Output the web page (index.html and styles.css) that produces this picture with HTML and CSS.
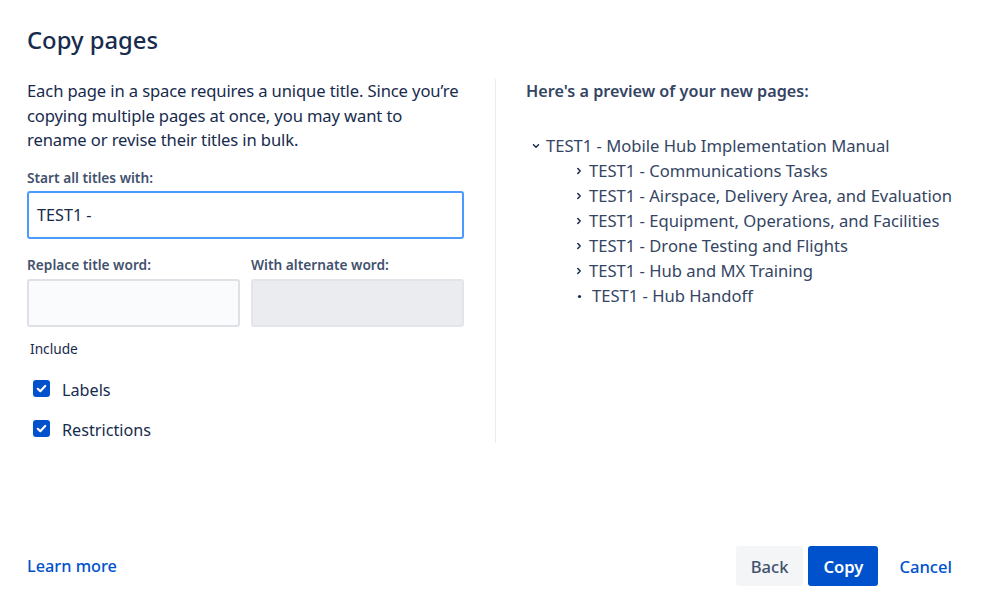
FILE: index.html
```html
<!DOCTYPE html>
<html>
<head>
<meta charset="utf-8">
<link rel="stylesheet" href="styles.css">
</head>
<body>
<div class="dialog">
  <h1 class="title">Copy pages</h1>
  <div class="columns">
    <div class="left">
      <p class="intro">Each page in a space requires a unique title. Since you’re copying multiple pages at once, you may want to rename or revise their titles in bulk.</p>
      <label class="field-label">Start all titles with:</label>
      <div class="input focused">TEST1 -</div>
      <div class="pair">
        <div class="pair-col">
          <label class="field-label">Replace title word:</label>
          <div class="input"></div>
        </div>
        <div class="pair-col">
          <label class="field-label">With alternate word:</label>
          <div class="input disabled"></div>
        </div>
      </div>
      <div class="include">Include</div>
      <div class="check-row first">
        <span class="checkbox"><svg viewBox="0 0 17 17" width="17" height="17"><rect x="0" y="0" width="17" height="17" rx="3" fill="#0052CC"/><path d="M4.8 8.8 L7.3 11.2 L12.2 6" fill="none" stroke="#fff" stroke-width="2.2" stroke-linecap="round" stroke-linejoin="round"/></svg></span>
        <span class="check-text">Labels</span>
      </div>
      <div class="check-row">
        <span class="checkbox"><svg viewBox="0 0 17 17" width="17" height="17"><rect x="0" y="0" width="17" height="17" rx="3" fill="#0052CC"/><path d="M4.8 8.8 L7.3 11.2 L12.2 6" fill="none" stroke="#fff" stroke-width="2.2" stroke-linecap="round" stroke-linejoin="round"/></svg></span>
        <span class="check-text">Restrictions</span>
      </div>
    </div>
    <div class="right">
      <div class="preview-head">Here's a preview of your new pages:</div>
      <ul class="tree">
        <li class="node root"><span class="chev"><svg viewBox="0 0 8 8" width="8" height="8"><path d="M1.5 2.8 L4 5.2 L6.5 2.8" fill="none" stroke="#172B4D" stroke-width="1.5" stroke-linecap="round" stroke-linejoin="round"/></svg></span>TEST1 - Mobile Hub Implementation Manual</li>
        <li class="node child"><span class="chev"><svg viewBox="0 0 8 8" width="8" height="8"><path d="M2.8 1.5 L5.2 4 L2.8 6.5" fill="none" stroke="#172B4D" stroke-width="1.5" stroke-linecap="round" stroke-linejoin="round"/></svg></span>TEST1 - Communications Tasks</li>
        <li class="node child"><span class="chev"><svg viewBox="0 0 8 8" width="8" height="8"><path d="M2.8 1.5 L5.2 4 L2.8 6.5" fill="none" stroke="#172B4D" stroke-width="1.5" stroke-linecap="round" stroke-linejoin="round"/></svg></span>TEST1 - Airspace, Delivery Area, and Evaluation</li>
        <li class="node child"><span class="chev"><svg viewBox="0 0 8 8" width="8" height="8"><path d="M2.8 1.5 L5.2 4 L2.8 6.5" fill="none" stroke="#172B4D" stroke-width="1.5" stroke-linecap="round" stroke-linejoin="round"/></svg></span>TEST1 - Equipment, Operations, and Facilities</li>
        <li class="node child"><span class="chev"><svg viewBox="0 0 8 8" width="8" height="8"><path d="M2.8 1.5 L5.2 4 L2.8 6.5" fill="none" stroke="#172B4D" stroke-width="1.5" stroke-linecap="round" stroke-linejoin="round"/></svg></span>TEST1 - Drone Testing and Flights</li>
        <li class="node child"><span class="chev"><svg viewBox="0 0 8 8" width="8" height="8"><path d="M2.8 1.5 L5.2 4 L2.8 6.5" fill="none" stroke="#172B4D" stroke-width="1.5" stroke-linecap="round" stroke-linejoin="round"/></svg></span>TEST1 - Hub and MX Training</li>
        <li class="node child leaf"><span class="chev"><svg viewBox="0 0 8 8" width="8" height="8"><circle cx="3.5" cy="4.5" r="1.6" fill="#172B4D"/></svg></span>TEST1 - Hub Handoff</li>
      </ul>
    </div>
  </div>
  <div class="footer">
    <a class="learn">Learn more</a>
    <div class="actions">
      <button class="btn subtle">Back</button>
      <button class="btn primary">Copy</button>
      <button class="btn link">Cancel</button>
    </div>
  </div>
</div>
</body>
</html>
```
FILE: styles.css
```css
html, body {
  margin: 0;
  padding: 0;
  background: #fff;
}
body {
  font-family: "Noto Sans", "Open Sans", "Liberation Sans", sans-serif;
  color: #172B4D;
}
.dialog {
  width: 993px;
  height: 612px;
  box-sizing: border-box;
  padding: 24px 27px 26px 27px;
  display: flex;
  flex-direction: column;
}
.title {
  margin: 0;
  font-size: 23.8px;
  line-height: 32px;
  font-weight: 500;
  color: #172B4D;
}
.columns {
  display: flex;
  margin-top: 23px;
}
.left {
  width: 437px;
  padding-right: 31px;
  border-right: 1px solid #EBECF0;
  height: 364px;
  box-sizing: content-box;
}
.intro {
  margin: 0;
  font-size: 16.6px;
  line-height: 24.5px;
  letter-spacing: -0.12px;
  color: #172B4D;
}
.field-label {
  display: block;
  font-size: 13.7px;
  line-height: 19px;
  font-weight: 600;
  color: #42526E;
  margin-top: 15px;
  margin-bottom: 4px;
}
.pair .field-label {
  margin-top: 16px;
  margin-bottom: 5px;
}
.input {
  height: 48px;
  box-sizing: border-box;
  border: 2px solid #DFE1E6;
  border-radius: 3px;
  background: #FAFBFC;
  font-size: 16.2px;
  line-height: 44px;
  padding: 0 8px;
  color: #172B4D;
}
.input.focused {
  border-color: #4C9AFF;
  background: #fff;
}
.input.disabled {
  background: #EBECF0;
  border-color: #E4E5EA;
}
.pair {
  display: flex;
  gap: 11px;
}
.pair-col {
  flex: 1;
}
.include {
  margin-top: 12px;
  margin-left: 3px;
  font-size: 13.7px;
  line-height: 19px;
  color: #172B4D;
}
.check-row {
  display: flex;
  align-items: center;
  height: 40px;
  padding-left: 6px;
}
.check-row.first { margin-top: 12px; }
.checkbox {
  width: 17px;
  height: 17px;
  display: block;
  margin-top: -3px;
}
.checkbox svg { display: block; }
.check-text {
  margin-left: 12px;
  font-size: 16.2px;
  color: #172B4D;
}
.right {
  padding-left: 30px;
  flex: 1;
}
.preview-head {
  font-size: 16.2px;
  line-height: 24px;
  font-weight: 600;
  color: #344563;
}
.tree {
  list-style: none;
  margin: 30px 0 0 0;
  padding: 0;
}
.node {
  display: flex;
  align-items: center;
  font-size: 16.6px;
  line-height: 25px;
  color: #344563;
}
.node.root { padding-left: 6px; }
.node.child { padding-left: 49px; }
.node.leaf { padding-left: 50px; line-height: 26px; }
.chev {
  width: 14px;
  display: flex;
  align-items: center;
}
.chev svg { display: block; }
.leaf .chev { width: 16px; }
.footer {
  margin-top: auto;
  display: flex;
  align-items: center;
  justify-content: space-between;
}
.learn {
  color: #0052CC;
  font-size: 16.3px;
  font-weight: 500;
}
.actions {
  display: flex;
  gap: 5px;
}
.btn {
  font-family: inherit;
  height: 40px;
  border: none;
  border-radius: 3px;
  font-size: 16.6px;
  font-weight: 500;
  padding: 0 15px;
}
.btn.subtle {
  background: #F4F5F7;
  color: #42526E;
}
.btn.primary {
  background: #0052CC;
  color: #fff;
  font-weight: 600;
}
.btn.link {
  background: transparent;
  color: #0052CC;
  padding: 0 14px 0 16px;
}
```
